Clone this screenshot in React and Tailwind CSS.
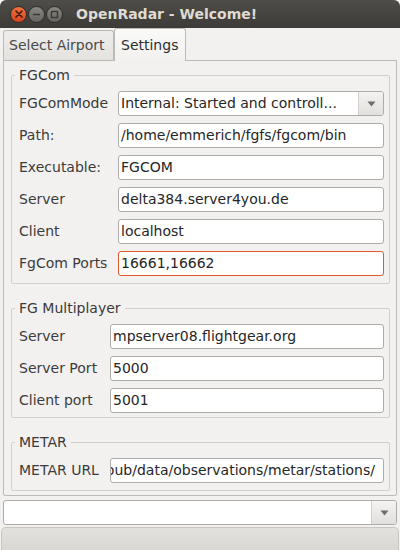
import React from "react";

function Field({ value, focus = false, end = false }) {
  return (
    <div
      className={`h-[25px] rounded-[3px] border bg-white flex items-center overflow-hidden whitespace-nowrap text-[#262626] ${
        focus ? "border-[#e0592a]" : "border-[#aeaca8]"
      } ${end ? "justify-end pr-[8px]" : "pl-[2px]"}`}
    >
      {value}
    </div>
  );
}

function Arrow() {
  return (
    <svg width="9" height="6" viewBox="0 0 9 6">
      <path d="M0.5 0.5 L8.5 0.5 L4.5 5.5 Z" fill="#6f6d69" />
    </svg>
  );
}

function Combo({ value }) {
  return (
    <div className="h-[25px] rounded-[3px] border border-[#aeaca8] bg-white flex overflow-hidden">
      <div className="flex-1 flex items-center pl-[2px] whitespace-nowrap overflow-hidden text-[#262626]">
        {value}
      </div>
      <div className="w-[25px] border-l border-[#d2d0cc] bg-gradient-to-b from-[#f4f3f2] to-[#e2e0dd] flex items-center justify-center">
        <Arrow />
      </div>
    </div>
  );
}

function Group({ title, cols, pb, children }) {
  return (
    <fieldset className={`border border-[#d3d0cb] rounded-[2px] pl-[7px] pr-[5px] pt-[8px] ${pb}`}>
      <legend className="-ml-[4px] px-[4px] leading-[16px] text-[#3a3a3a]">{title}</legend>
      <div className={`grid ${cols} gap-y-[7px] items-center`}>{children}</div>
    </fieldset>
  );
}

function Label({ children }) {
  return <div className="text-[#3c3c3c] whitespace-nowrap">{children}</div>;
}

function WinButton({ kind }) {
  if (kind === "close") {
    return (
      <div className="w-[17px] h-[17px] rounded-full border border-[#2e2d2a] bg-gradient-to-b from-[#f3703d] to-[#d4441a] flex items-center justify-center">
        <svg width="8" height="8" viewBox="0 0 8 8">
          <path d="M1 1 L7 7 M7 1 L1 7" stroke="#3b1a0f" strokeWidth="1.6" strokeLinecap="round" />
        </svg>
      </div>
    );
  }
  return (
    <div className="w-[17px] h-[17px] rounded-full border border-[#2e2d2a] bg-gradient-to-b from-[#8a8883] to-[#66645f] flex items-center justify-center">
      {kind === "min" ? (
        <svg width="9" height="9" viewBox="0 0 9 9">
          <path d="M1 4.5 L8 4.5" stroke="#3a3935" strokeWidth="1.6" />
        </svg>
      ) : (
        <svg width="9" height="9" viewBox="0 0 9 9">
          <rect x="1.5" y="1.5" width="6" height="6" fill="none" stroke="#3a3935" strokeWidth="1.4" />
        </svg>
      )}
    </div>
  );
}

export default function App() {
  return (
    <div className="w-[400px] h-[550px] bg-white font-['DejaVu_Sans',sans-serif] text-[14px] leading-[17px]">
      <div className="w-[400px] h-[550px] rounded-t-[6px] overflow-hidden bg-[#f2f1f0] flex flex-col">
        {/* title bar */}
        <div className="h-[28px] shrink-0 bg-gradient-to-b from-[#4f4d48] to-[#3c3b37] flex items-center pl-[10px]">
          <div className="flex items-center gap-[1px]">
            <WinButton kind="close" />
            <WinButton kind="min" />
            <WinButton kind="max" />
          </div>
          <div className="ml-[13px] font-bold text-[#dfdbd2] whitespace-nowrap">OpenRadar - Welcome!</div>
        </div>

        {/* tabs */}
        <div className="h-[32px] shrink-0 flex items-end px-[3px]">
          <div className="w-[111px] h-[30px] border border-b-0 border-[#bdbab5] rounded-t-[3px] bg-gradient-to-b from-[#eeedeb] to-[#e4e3e0] flex items-center pl-[5px] text-[#4a4a4a]">
            Select Airport
          </div>
          <div className="relative z-10 -mb-px w-[72px] h-[33px] border border-b-0 border-[#bdbab5] rounded-t-[3px] bg-gradient-to-b from-[#fafaf9] to-[#f2f1f0] flex items-center pl-[6px] text-[#2f2f2f]">
            Settings
          </div>
        </div>

        {/* tab panel */}
        <div className="mx-[3px] border border-[#bdbab5] rounded-b-[2px] pl-[7px] pr-[6px] pt-[6px] pb-[4px] flex flex-col gap-[16px]">
          <Group title="FGCom" cols="grid-cols-[99px_1fr]" pb="pb-[7px]">
            <Label>FGComMode</Label>
            <Combo value="Internal: Started and controll..." />
            <Label>Path:</Label>
            <Field value="/home/emmerich/fgfs/fgcom/bin" />
            <Label>Executable:</Label>
            <Field value="FGCOM" />
            <Label>Server</Label>
            <Field value="delta384.server4you.de" />
            <Label>Client</Label>
            <Field value="localhost" />
            <Label>FgCom Ports</Label>
            <Field value="16661,16662" focus />
          </Group>

          <Group title="FG Multiplayer" cols="grid-cols-[91px_1fr]" pb="pb-[4px]">
            <Label>Server</Label>
            <Field value="mpserver08.flightgear.org" />
            <Label>Server Port</Label>
            <Field value="5000" />
            <Label>Client port</Label>
            <Field value="5001" />
          </Group>

          <Group title="METAR" cols="grid-cols-[91px_1fr]" pb="pb-[7px]">
            <Label>METAR URL</Label>
            <Field value="http://weather.noaa.gov/pub/data/observations/metar/stations/" end />
          </Group>
        </div>

        {/* bottom combo */}
        <div className="mx-[3px] mt-[4px]">
          <Combo value="" />
        </div>

        {/* status strip */}
        <div className="mt-[2px] mx-[1px] flex-1 rounded-t-[5px] border border-b-0 border-[#c9c6c1] bg-gradient-to-b from-[#e3e1de] to-[#d9d7d3]" />
      </div>
    </div>
  );
}
